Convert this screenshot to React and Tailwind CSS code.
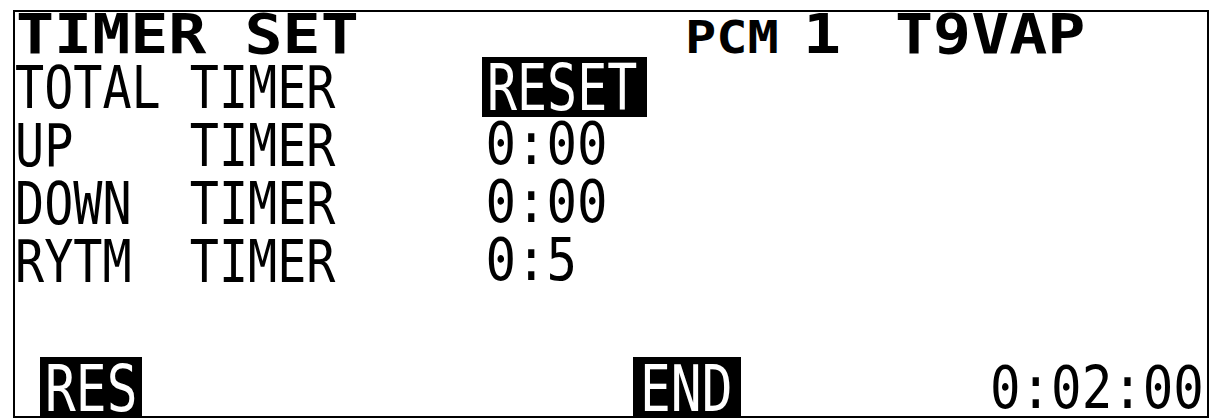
export default function App() {
  const rows = [
    { label: "TOTAL TIMER", value: null },
    { label: "UP    TIMER", value: "0:00" },
    { label: "DOWN  TIMER", value: "0:00" },
    { label: "RYTM  TIMER", value: "0:5" },
  ];
  return (
    <div className="w-[1212px] h-[420px] bg-white overflow-hidden font-['DejaVu_Sans_Mono',monospace] text-black">
      <div className="ml-[13px] mt-[10px] w-[1196px] h-[408px] border-2 border-black flex flex-col">
        {/* header */}
        <div className="flex items-start h-[46px] shrink-0">
          <div className="ml-[1px] w-[669px] text-[55px] font-bold leading-[44px] whitespace-pre origin-left scale-x-[1.15]">
            TIMER SET
          </div>
          <div className="w-[118px] mt-[8px] text-[44px] font-bold leading-[36px] origin-left scale-x-[1.18]">PCM</div>
          <div className="w-[92px] text-[55px] font-bold leading-[44px] origin-left scale-x-[1.15]">1</div>
          <div className="text-[55px] font-bold leading-[44px] origin-left scale-x-[1.15]">T9VAP</div>
        </div>
        {/* rows */}
        {rows.map((r, i) => (
          <div key={i} className="flex items-start h-[58px] shrink-0">
            <div className="w-[467px] mt-[6px] text-[59px] leading-[48px] whitespace-pre origin-left scale-x-[0.82]">{r.label}</div>
            {r.value === null ? (
              <div className="-mt-[1px] w-[165px] h-[60px] bg-black text-white pl-[5px] pt-[5px]">
                <div className="text-[64px] leading-[52px] origin-left scale-x-[0.78]">RESET</div>
              </div>
            ) : (
              <div className="pl-[4px] mt-[4px] text-[59px] leading-[48px] origin-left scale-x-[0.86]">{r.value}</div>
            )}
          </div>
        ))}
        {/* bottom */}
        <div className="mt-auto flex items-start h-[60px] shrink-0">
          <div className="ml-[25px] mt-[1px] w-[102px] h-[61px] bg-black text-white pl-[5px] pt-[6px]">
            <div className="text-[64px] leading-[52px] origin-left scale-x-[0.8]">RES</div>
          </div>
          <div className="ml-[491px] mt-[1px] w-[108px] h-[61px] bg-black text-white pl-[7px] pt-[6px]">
            <div className="text-[64px] leading-[52px] origin-left scale-x-[0.8]">END</div>
          </div>
          <div className="ml-[249px] mt-[8px] text-[59px] leading-[48px] origin-left scale-x-[0.86]">0:02:00</div>
        </div>
      </div>
    </div>
  );
}
